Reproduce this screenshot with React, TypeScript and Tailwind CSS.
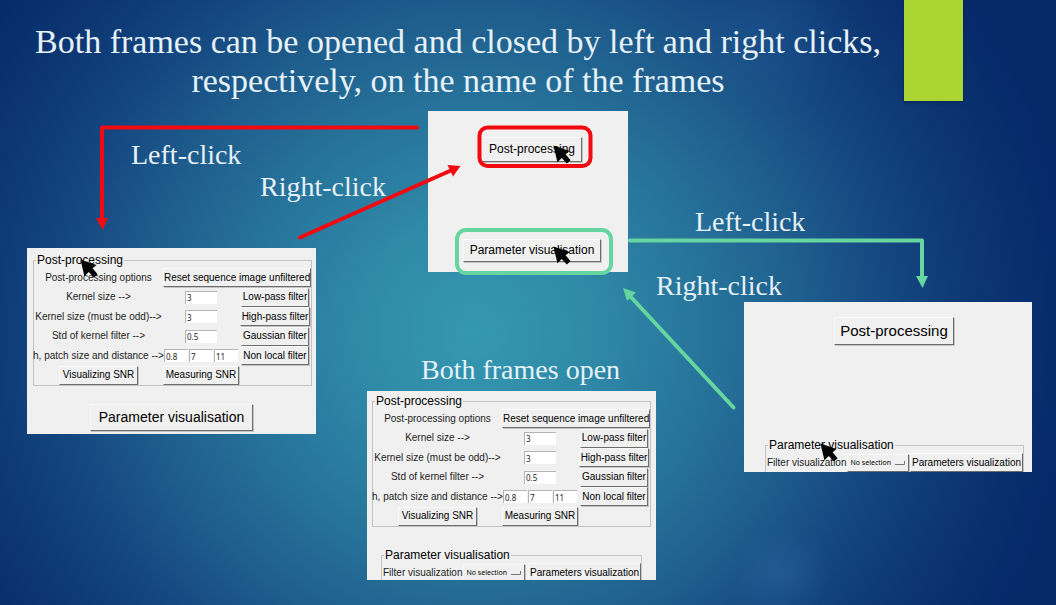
import type { ReactNode } from "react";

const raised =
  "border border-t-[#fafafa] border-l-[#f7f7f7] border-r-[#6d6d6d] border-b-[#6d6d6d] bg-[#f0f0f0] whitespace-nowrap text-black shadow-[1px_1px_0_#c4c4c4]";

function SmallButton({ children, className = "px-px" }: { children: ReactNode; className?: string }) {
  return (
    <button type="button" className={`h-[19px] text-[10px] leading-none ${raised} ${className}`}>
      {children}
    </button>
  );
}

function Field({ label, value, className }: { label: string; value: string; className: string }) {
  return (
    <input
      type="text"
      aria-label={label}
      defaultValue={value}
      className={`h-[13px] border-t border-l border-[#b4b4b4] bg-white pl-px font-['Noto_Sans',sans-serif] text-[8px] leading-none text-[#222] outline-none ${className}`}
    />
  );
}

function Cursor({ className }: { className: string }) {
  return (
    <svg aria-hidden="true" viewBox="0 0 18 20" className={`pointer-events-none absolute h-5 w-[18px] ${className}`}>
      <path d="M0.5 0.5L16.5 6L12.6 9.2L17.6 15.2L13.8 18.6L8.8 13L4.4 17.2Z" fill="#050505" />
    </svg>
  );
}

function Panel({ children, className }: { children: ReactNode; className: string }) {
  return (
    <section className={`absolute overflow-hidden bg-[#f0f0f0] font-['Liberation_Sans',Arial,sans-serif] text-black ${className}`}>
      {children}
    </section>
  );
}

function Row({ name, field, value, action }: { name: string; field: string; value: string; action: string }) {
  return (
    <>
      <span>{name}</span>
      <Field label={field} value={value} className="w-8" />
      <SmallButton>{action}</SmallButton>
    </>
  );
}

function PostProcessingFrame({ className }: { className: string }) {
  return (
    <fieldset className={`min-w-0 border border-[#c3c3c3] ${className}`}>
      <legend className="ml-[2px] px-px text-[12px] leading-[16px]">Post-processing</legend>
      <div className="grid h-[117px] grid-cols-[129px_76px_minmax(0,1fr)] grid-rows-6 items-center justify-items-center text-[10px] leading-none whitespace-nowrap text-[#1c1c1c]">
        <span>Post-processing options</span>
        <SmallButton className="col-span-2 w-full">Reset sequence image unfiltered</SmallButton>
        <Row name="Kernel size -->" field="Low-pass kernel size" value="3" action="Low-pass filter" />
        <Row name="Kernel size (must be odd)-->" field="High-pass kernel size" value="3" action="High-pass filter" />
        <Row name="Std of kernel filter -->" field="Standard deviation" value="0.5" action="Gaussian filter" />
        <span>h, patch size and distance --&gt;</span>
        <div className="flex w-full gap-px pl-px">
          <Field label="h" value="0.8" className="w-6" />
          <Field label="Patch size" value="7" className="w-6" />
          <Field label="Patch distance" value="11" className="w-6" />
        </div>
        <SmallButton>Non local filter</SmallButton>
        <SmallButton className="px-[3px]">Visualizing SNR</SmallButton>
        <SmallButton className="px-[2px]">Measuring SNR</SmallButton>
      </div>
    </fieldset>
  );
}

function ParameterFrame({ className }: { className: string }) {
  return (
    <fieldset className={`min-w-0 border border-b-0 border-[#c3c3c3] ${className}`}>
      <legend className="ml-[2px] px-px text-[12px] leading-[16px]">Parameter visualisation</legend>
      <div className="flex items-center justify-between pl-px text-[10px] leading-none whitespace-nowrap text-[#1c1c1c]">
        <label className="flex items-center gap-px">
          Filter visualization
          <span className="relative flex">
            <select className={`h-[18px] w-[62px] appearance-none pl-[2px] font-['Noto_Sans',sans-serif] text-[7px] ${raised}`}>
              <option>No selection</option>
            </select>
            <svg aria-hidden="true" viewBox="0 0 10 4" className="pointer-events-none absolute top-[7px] right-[4px] h-1 w-[10px]">
              <path d="M0 3.5H9.5V0" fill="none" stroke="#777" />
            </svg>
          </span>
        </label>
        <SmallButton>Parameters visualization</SmallButton>
      </div>
    </fieldset>
  );
}

function Caption({ children, className }: { children: ReactNode; className: string }) {
  return <p className={`absolute text-[28px] leading-8 whitespace-nowrap ${className}`}>{children}</p>;
}

export default function App() {
  return (
    <main className="min-h-screen overflow-x-auto bg-[#06296a] bg-[radial-gradient(circle_at_74%_95%,#3f86c038_0%,#3f86c000_5%),radial-gradient(circle_at_73%_4%,#3f86c022_0%,#3f86c000_9%),radial-gradient(ellipse_57%_96%_at_45%_55%,#3598b2_0%,#2f89a7_20%,#26729a_40%,#1e5c8c_56%,#144680_70%,#0c3672_84%,#06296a_100%)] font-['Liberation_Serif',serif] text-[#e6f1f8]">
      <header className="flex h-[101px] items-start">
        <h1 className="flex-1 pt-[22px] pl-3 text-center text-[34px] leading-[39px]">
          Both frames can be opened and closed by left and right clicks,
          <br />
          respectively, on the name of the frames
        </h1>
        <div className="mr-[93px] h-full w-[59px] bg-[#abd533] shadow-[0_1px_3px_#0a2350]" />
      </header>

      <div className="relative mx-auto h-[504px] w-[1008px]">
        <Panel className="top-[147px] left-[3px] h-[186px] w-[289px] pt-1">
          <PostProcessingFrame className="mr-[4px] ml-[6px]" />
          <div className="flex justify-center pt-[18px]">
            <button type="button" className={`h-[27px] px-2 pb-[2px] text-[14px] leading-none ${raised}`}>
              Parameter visualisation
            </button>
          </div>
          <Cursor className="top-[11px] left-[53px]" />
        </Panel>

        <Panel className="top-[10px] left-[404px] flex h-[161px] w-[200px] flex-col items-center justify-between pt-[26px] pb-[10px] pl-2">
          <button type="button" className={`h-[25px] px-[6px] pb-px text-[12px] leading-none ${raised}`}>
            Post-processing
          </button>
          <button type="button" className={`h-[23px] px-[6px] pb-px text-[12px] leading-none ${raised}`}>
            Parameter visualisation
          </button>
          <Cursor className="top-[34px] left-[125px]" />
          <Cursor className="top-[135px] left-[125px]" />
        </Panel>

        <Panel className="top-[290px] left-[343px] h-[189px] w-[289px] pt-[2px]">
          <PostProcessingFrame className="mx-[5px]" />
          <ParameterFrame className="mt-[20px] mr-[14px] ml-[14px]" />
        </Panel>

        <Panel className="top-[201px] left-[720px] flex h-[170px] w-[288px] flex-col justify-between pt-[15px]">
          <button type="button" className={`ml-3 h-[28px] self-center px-[5px] pb-px text-[15px] leading-none ${raised}`}>
            Post-processing
          </button>
          <ParameterFrame className="mr-[8px] ml-[21px]" />
          <Cursor className="top-[141px] left-[76px]" />
        </Panel>

        <Caption className="top-[38px] left-[107px]">Left-click</Caption>
        <Caption className="top-[70px] left-[236px]">Right-click</Caption>
        <Caption className="top-[105px] left-[671px]">Left-click</Caption>
        <Caption className="top-[169px] left-[632px]">Right-click</Caption>
        <Caption className="top-[253px] left-[397px]">Both frames open</Caption>

        <svg aria-hidden="true" viewBox="0 0 1008 504" className="pointer-events-none absolute inset-0 h-full w-full" fill="none" strokeWidth="4" strokeLinecap="round" strokeLinejoin="round">
          <g stroke="#f20a10">
            <path d="M393 26.5H78V119" />
            <path d="M276 136.500L428 69" />
            <rect x="455.500" y="26.500" width="111" height="38.500" rx="8" />
            <path d="M72 117H84L78.500 129Z" fill="#f20a10" stroke="none" />
            <path d="M423.500 64L436.500 65L429 75.500Z" fill="#f20a10" stroke="none" />
          </g>
          <g stroke="#66d5a0">
            <path d="M606 139.500H898V177" />
            <path d="M709.500 306.500L605 194" />
            <rect x="433" y="129" width="154" height="43" rx="9" />
            <path d="M892 175H904L898.500 187Z" fill="#66d5a0" stroke="none" />
            <path d="M599 187L612 191.500L603 200Z" fill="#66d5a0" stroke="none" />
          </g>
        </svg>
      </div>
    </main>
  );
}
